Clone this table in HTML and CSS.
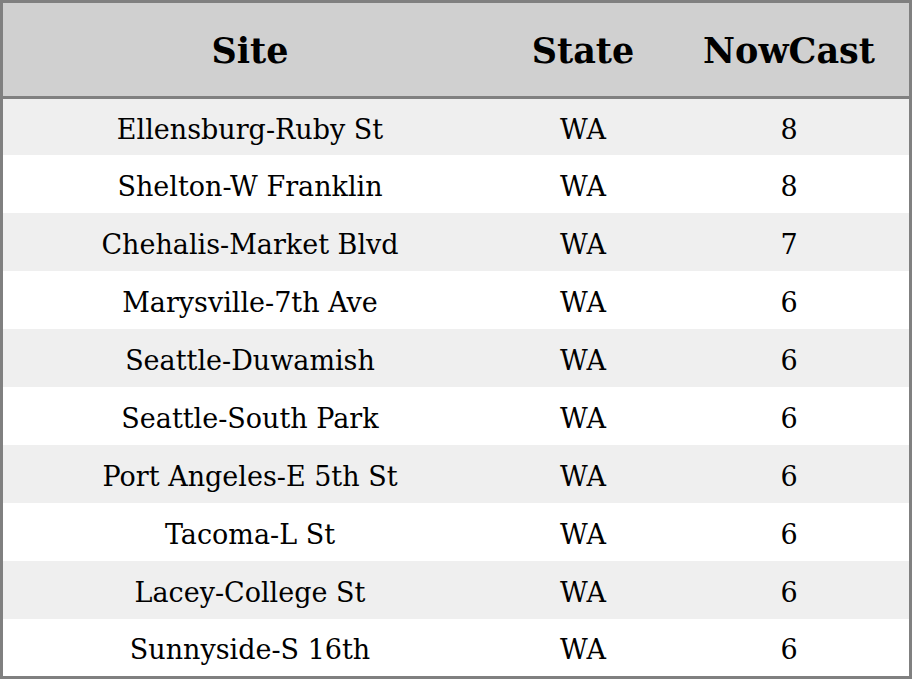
FILE: index.html
```html
<!DOCTYPE html>
<html>
<head>
<meta charset="utf-8">
<link rel="stylesheet" href="styles.css">
</head>
<body>
<table class="tbl">
  <thead>
    <tr class="head"><th class="c-site">Site</th><th class="c-state">State</th><th class="c-now">NowCast</th></tr>
  </thead>
  <tbody>
    <tr class="odd first"><td>Ellensburg-Ruby St</td><td>WA</td><td>8</td></tr>
    <tr class="even"><td>Shelton-W Franklin</td><td>WA</td><td>8</td></tr>
    <tr class="odd"><td>Chehalis-Market Blvd</td><td>WA</td><td>7</td></tr>
    <tr class="even"><td>Marysville-7th Ave</td><td>WA</td><td>6</td></tr>
    <tr class="odd"><td>Seattle-Duwamish</td><td>WA</td><td>6</td></tr>
    <tr class="even"><td>Seattle-South Park</td><td>WA</td><td>6</td></tr>
    <tr class="odd"><td>Port Angeles-E 5th St</td><td>WA</td><td>6</td></tr>
    <tr class="even"><td>Tacoma-L St</td><td>WA</td><td>6</td></tr>
    <tr class="odd"><td>Lacey-College St</td><td>WA</td><td>6</td></tr>
    <tr class="even last"><td>Sunnyside-S 16th</td><td>WA</td><td>6</td></tr>
  </tbody>
</table>
</body>
</html>
```
FILE: styles.css
```css
html, body {
  margin: 0;
  padding: 0;
  background: #ffffff;
}
.tbl {
  width: 912px;
  border-collapse: separate;
  border-spacing: 0;
  border: 3px solid #808080;
  font-family: "DejaVu Serif", serif;
  color: #000;
  table-layout: fixed;
}
.tbl th, .tbl td {
  padding: 0;
  text-align: center;
  vertical-align: middle;
  line-height: 1;
  box-sizing: border-box;
}
.c-site { width: 494px; }
.c-state { width: 172px; }
.c-now { width: 240px; }
.head th {
  height: 96px;
  padding-top: 1px;
  background: #d0d0d0;
  font-weight: bold;
  font-size: 35px;
  border-bottom: 3px solid #808080;
}
.tbl td {
  height: 58px;
  padding-top: 4px;
  font-size: 27px;
}
.tbl tr.first td { height: 56px; }
.tbl tr.last td { height: 57px; }
.odd td { background: #efefef; }
.even td { background: #ffffff; }
```
